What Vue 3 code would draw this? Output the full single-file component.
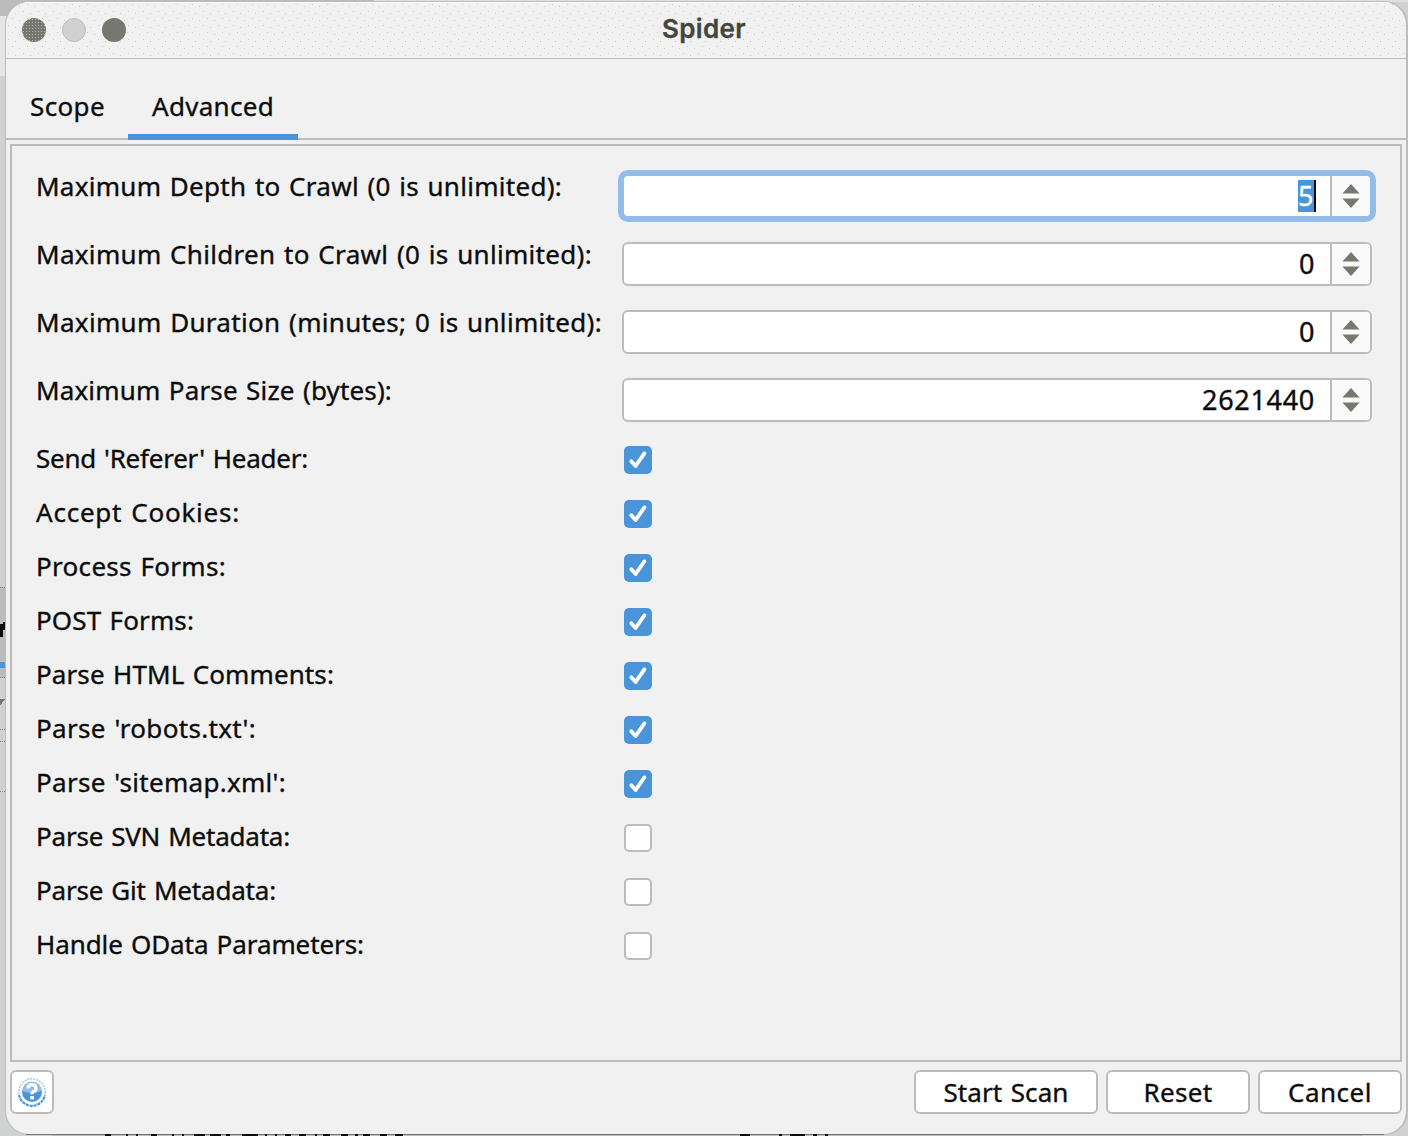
<script setup>
const spinners = [
  { label: 'Maximum Depth to Crawl (0 is unlimited):', width: 526, value: '5', valueWidth: 18, focused: true },
  { label: 'Maximum Children to Crawl (0 is unlimited):', width: 556, value: '0', valueWidth: 16 },
  { label: 'Maximum Duration (minutes; 0 is unlimited):', width: 566, value: '0', valueWidth: 16 },
  { label: 'Maximum Parse Size (bytes):', width: 356, value: '2621440', valueWidth: 113 },
]
const checks = [
  { label: "Send 'Referer' Header:", width: 272, on: true },
  { label: 'Accept Cookies:', width: 204, on: true },
  { label: 'Process Forms:', width: 190, on: true },
  { label: 'POST Forms:', width: 158, on: true },
  { label: 'Parse HTML Comments:', width: 298, on: true },
  { label: "Parse 'robots.txt':", width: 220, on: true },
  { label: "Parse 'sitemap.xml':", width: 250, on: true },
  { label: 'Parse SVN Metadata:', width: 254, on: false },
  { label: 'Parse Git Metadata:', width: 240, on: false },
  { label: 'Handle OData Parameters:', width: 328, on: false },
]
// [left, width] of the glyph tops that peek out below the window
const peeks = [
  [105, 6], [126, 2], [136, 2], [151, 6], [172, 2], [182, 2], [194, 11], [210, 11], [226, 4], [242, 16],
  [265, 2], [275, 2], [285, 6], [299, 7], [315, 2], [323, 7], [341, 7], [355, 3], [363, 7], [380, 7], [395, 8],
  [740, 10], [779, 3], [790, 15], [813, 4], [825, 3],
]
// Tracks a label out to the given advance width
const vFit = (el, { value }) => {
  const fit = () => {
    el.style.letterSpacing = '0px'
    const natural = el.getBoundingClientRect().width
    el.style.letterSpacing = (value - natural) / el.textContent.length + 'px'
  }
  requestAnimationFrame(fit)
}
</script>

<template>
  <div class="desktop">
    <svg class="behind" width="1408" height="1136" shape-rendering="crispEdges">
      <rect width="1408" height="1136" fill="#d0d2d1" />
      <rect width="374" height="2" fill="#bcbcbc" />
      <rect width="20" height="16" fill="#bcbcbc" />
      <rect x="374" width="1034" height="2" fill="#dedede" />
      <rect y="16" width="6" height="60" fill="#e6e6e6" />
      <rect y="587" width="6" height="91" fill="#bcbcbc" />
      <path d="M0 587.5H6M0 677.5H6M0 729.5H6M0 741.5H6M0 791.5H6" stroke="#83837e" stroke-dasharray="1 1" />
      <path d="M0 624h3v-2h3v8H3v7H0z" fill="#0c0c0c" />
      <rect y="662" width="6" height="6" fill="#4a95d9" />
      <path d="M0 699H5L0 706z" fill="#777770" />
    </svg>

    <main class="window">
      <header class="titlebar">
        <i class="light closing"></i><i class="light idle"></i><i class="light"></i>
        <h1><span v-fit="84">Spider</span></h1>
      </header>

      <nav class="tabs">
        <div class="tab scope"><span v-fit="75">Scope</span></div>
        <div class="tab active"><span v-fit="122">Advanced</span></div>
      </nav>

      <section class="panel">
        <div v-for="s in spinners" :key="s.label" class="row tall">
          <label><span v-fit="s.width">{{ s.label }}</span></label>
          <div class="spinner" :class="{ focused: s.focused }">
            <div class="value"><span v-fit="s.valueWidth">{{ s.value }}</span></div>
            <div class="steps">
              <svg width="18" height="24" viewBox="0 0 18 24">
                <path d="M9 0L17.6 9.6H.4zM9 24L17.6 14.4H.4z" fill="#777770" />
              </svg>
            </div>
          </div>
        </div>
        <div v-for="c in checks" :key="c.label" class="row">
          <label><span v-fit="c.width">{{ c.label }}</span></label>
          <div class="check" :class="{ on: c.on }">
            <svg v-if="c.on" width="28" height="28" viewBox="0 0 28 28">
              <path d="M7.3 15.2L11.6 20L20.4 7.4" fill="none" stroke="#fff" stroke-width="3.8" stroke-linecap="round" stroke-linejoin="round" />
            </svg>
          </div>
        </div>
      </section>

      <footer class="footer">
        <div class="button help">
          <svg width="30" height="30" viewBox="0 0 30 30">
            <circle cx="15" cy="15" r="13.2" fill="#fff" stroke="#a9c9ea" stroke-width="1.6" stroke-dasharray="2 1" />
            <path d="M2 18A13.2 13.2 0 0 0 28 18" fill="none" stroke="#4a95d9" stroke-width="2" stroke-dasharray="3 1" />
            <circle cx="15" cy="15" r="10" fill="#4a95d9" />
            <path d="M5.5 14A9.5 9.5 0 0 1 24.5 14Q15 18 5.5 14z" fill="#93bce9" />
            <path d="M11 11.5Q11.2 7.6 15 7.6T19 11.2Q19 13.4 16.5 14.5Q15 15.3 15 17.2" fill="none" stroke="#fff" stroke-width="3.4" />
            <rect x="13.2" y="19" width="3.8" height="3.4" fill="#fff" />
          </svg>
        </div>
        <div class="button start"><span v-fit="125">Start Scan</span></div>
        <div class="button"><span v-fit="69">Reset</span></div>
        <div class="button"><span v-fit="84">Cancel</span></div>
      </footer>
    </main>

    <svg class="below" width="1408" height="2" shape-rendering="crispEdges">
      <rect x="26" width="1358" height="1" fill="#777770" />
      <rect x="52" y="1" width="1310" height="1" fill="#bcbcbc" />
      <rect v-for="p in peeks" :key="p[0]" :x="p[0]" :width="p[1]" height="2" fill="#0c0c0c" />
    </svg>
  </div>
</template>

<style>
body { margin: 0; overflow: hidden; }
</style>

<style scoped>
.desktop {
  position: relative;
  width: 1408px;
  height: 1136px;
  overflow: hidden;
  box-sizing: border-box;
  padding: 1px 0 0 5px;
  font: 26px/36px "Noto Sans", "Open Sans", sans-serif;
  color: #0c0c0c;
  -webkit-text-stroke: 0.35px;
}
.desktop * { box-sizing: border-box; }
span { display: inline-block; white-space: pre; word-spacing: 1.5px; }
svg { display: block; }
.behind { position: absolute; left: 0; top: 0; }
.below { position: absolute; left: 0; bottom: 0; }
.window {
  position: relative;
  width: 1403px;
  height: 1134px;
  border: 1px solid #bcbcbc;
  border-right-width: 2px;
  border-radius: 24px;
  background: #f1f1f1;
  display: flex;
  flex-direction: column;
  overflow: hidden;
}
.titlebar {
  position: relative;
  flex: none;
  height: 57px;
  border-bottom: 1px solid #bcbcbc;
  padding: 16px 0 0 16px;
  display: flex;
  gap: 16px;
  background-image:
    radial-gradient(circle at 2.5px 3.5px, #cacaca 0.7px, transparent 0.8px),
    radial-gradient(circle at 9.5px 5.5px, #cacaca 0.7px, transparent 0.8px),
    radial-gradient(circle at 6.5px 10.5px, #cacaca 0.7px, transparent 0.8px),
    radial-gradient(circle at 13.5px 12.5px, #cacaca 0.7px, transparent 0.8px);
  background-size: 15px 14px;
  background-position: 0 6px;
  box-shadow: inset 0 1px #fff;
}
.light { width: 24px; height: 24px; border-radius: 50%; background: #777770; }
.closing {
  background-image: radial-gradient(#b4b5b1 0.6px, transparent 0.9px);
  background-size: 3px 3px;
}
.idle { background: #d0d2d1; border: 1px solid #bcbcbc; }
h1 {
  position: absolute;
  left: 0;
  right: 4px;
  top: 10px;
  margin: 0;
  text-align: center;
  font: 600 26px/34px Inter, sans-serif;
  color: #454540;
}
.tabs {
  flex: none;
  height: 81px;
  display: flex;
  border-bottom: 2px solid #bcbcbc;
  padding-top: 30px;
}
.tab { width: 122px; padding-left: 24px; height: 51px; line-height: 34px; }
.active { width: 170px; border-bottom: 6px solid #4a95d9; }
.panel {
  flex: none;
  width: 1392px;
  height: 918px;
  margin: 4px 0 0 4px;
  border: 2px solid #bcbcbc;
  padding: 20px 24px 0 22px;
}
.row { height: 54px; display: flex; }
.tall { height: 68px; }
label { width: 590px; margin-top: 2px; padding-left: 2px; }
.tall label { width: 588px; }
.spinner {
  margin-top: 8px;
  width: 750px;
  height: 44px;
  border: 2px solid #bcbcbc;
  border-radius: 6px;
  background: #fff;
  display: flex;
}
.focused { border-color: #93bce9; box-shadow: 0 0 0 4px #93bce9; }
.value { flex: 1; text-align: right; padding: 3px 15px 0 0; font-size: 27px; line-height: 34px; }
.focused .value span {
  width: 18px;
  height: 32px;
  margin: 1px -1px 0 0;
  border-right: 2px solid #0c0c0c;
  background: #4a95d9;
  color: #fff;
  line-height: 32px;
  text-align: left;
}
.steps {
  width: 40px;
  border-left: 2px solid #bcbcbc;
  border-radius: 0 4px 4px 0;
  background: #fafafa;
  display: grid;
  place-items: center;
}
.check {
  width: 28px;
  height: 28px;
  margin-top: 8px;
  border: 2px solid #bcbcbc;
  border-radius: 5px;
  background: #fff;
}
.on { border: 0; background: #4a95d9; }
.footer {
  flex: none;
  display: flex;
  gap: 8px;
  margin: 8px 0 0 4px;
  width: 1392px;
}
.button {
  width: 144px;
  height: 44px;
  border: 2px solid #bcbcbc;
  border-radius: 6px;
  background: #fff;
  display: flex;
  justify-content: center;
  align-items: center;
}
.start { width: 184px; }
.help { width: 44px; margin-right: auto; }
</style>
